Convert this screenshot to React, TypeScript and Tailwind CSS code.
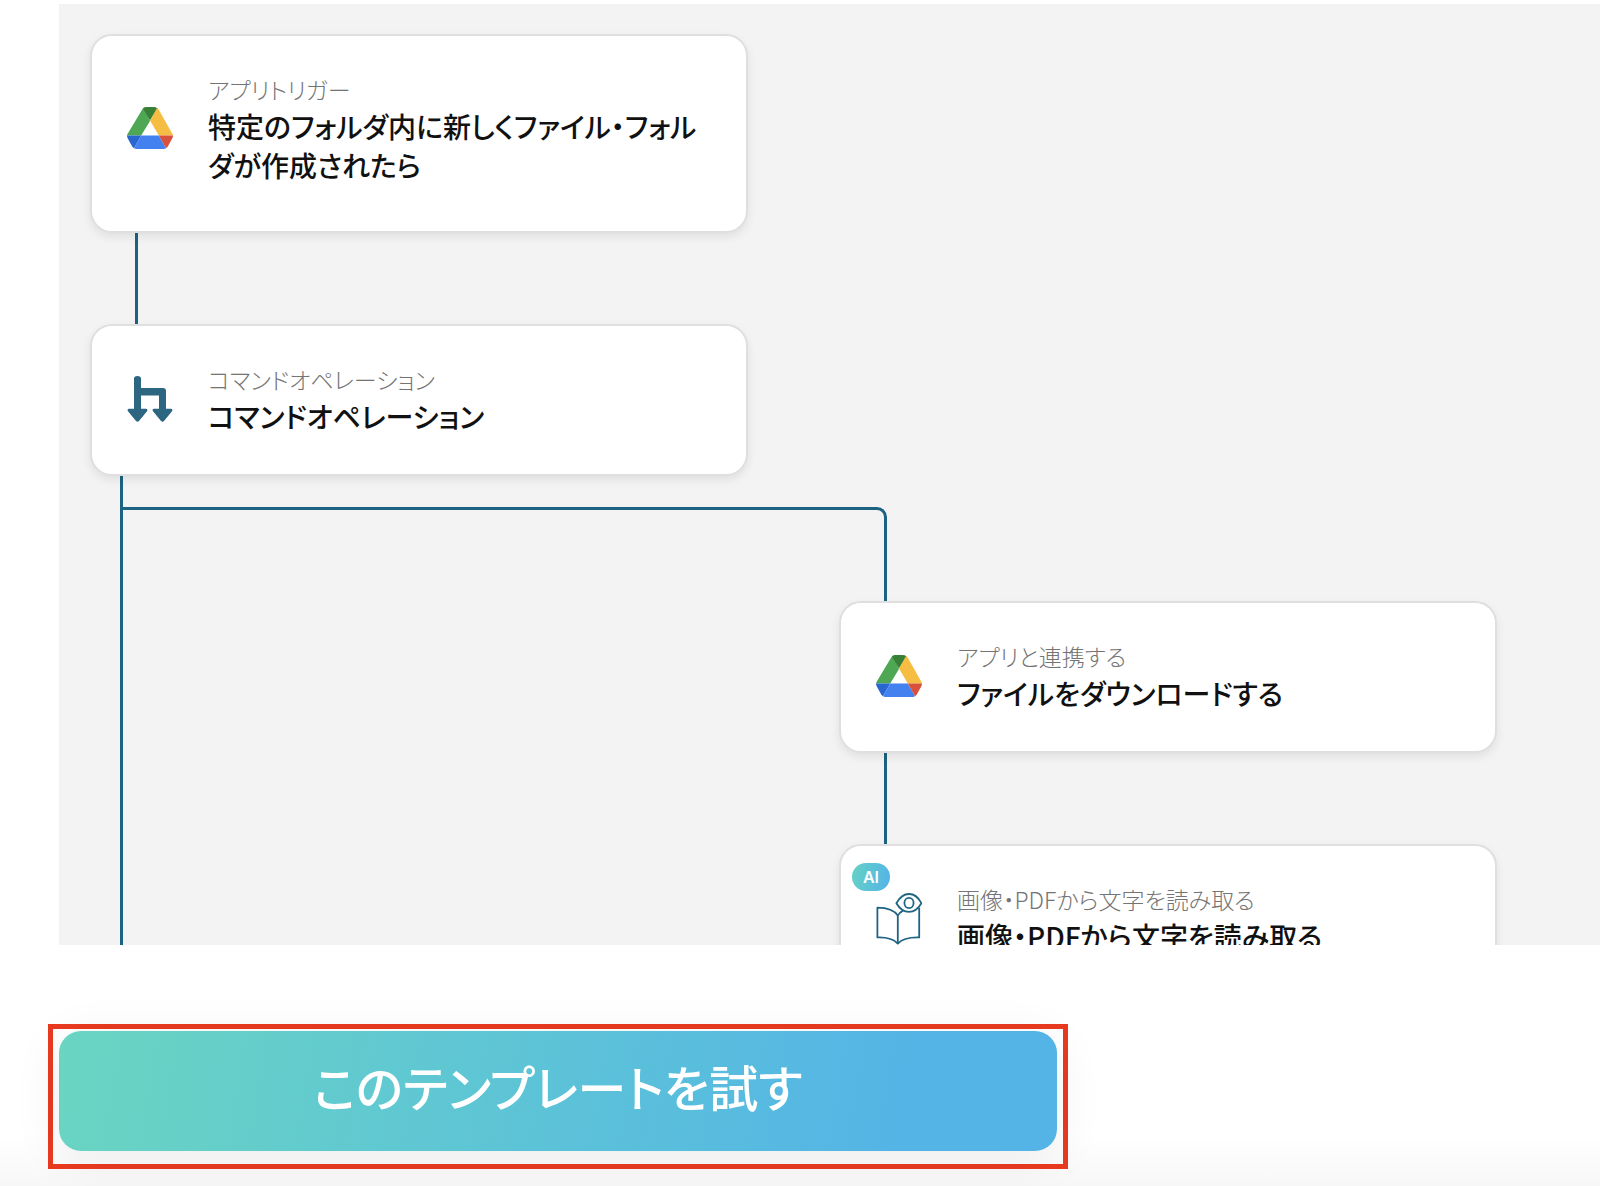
import type { ReactNode } from "react";

function DriveIcon() {
  return (
    <svg viewBox="0 0 46 42" className="h-[42px] w-[46px]" aria-hidden="true">
      <path d="M17 0.6 Q15.8 1.4 15.2 2.6 L0.8 26.6 Q0 27.8 0 28.4 H14.2 L23 14 Z" fill="#4ea853" />
      <path d="M16 1.4 Q17.4 0 19.2 0 H26.8 Q29 0 30.4 1.4 L23 13.4 Z" fill="#3a7f37" />
      <path d="M30.2 0.8 Q31 1.4 31.8 2.8 L45.2 26.4 Q46 27.6 46 28.4 H31.8 L23 13.4 Z" fill="#f5bd42" />
      <path d="M0 28.4 H14.2 L7 41.2 Q6 40.6 5.2 39.4 L0.8 31.6 Q0 30 0 28.4 Z" fill="#2a66d0" />
      <path d="M14.2 28.4 H31.8 L39 41.2 Q38 42 36.8 42 H9.4 Q8 42 7 41.2 Z" fill="#4380f0" />
      <path d="M31.8 28.4 H46 Q46 30 45.2 31.6 L40.8 39.4 Q40 40.6 39 41.2 Z" fill="#d8513d" />
    </svg>
  );
}

function BranchIcon() {
  return (
    <svg viewBox="0 0 46 46" className="h-[46px] w-[46px]" aria-hidden="true" fill="#2c6680">
      <path d="M7 2.5 Q7 0 10.4 0 Q14 0 14 2.5 V12 H36 Q39 12 39 15 V32.8 H44.2 Q46.2 33.4 45 35.2 L37 45 Q35.5 46.6 34 45 L26 35.2 Q24.8 33.4 26.8 32.8 H32 V19.6 H14 V32.8 H19.2 Q21.2 33.4 20 35.2 L12 45 Q10.5 46.6 9 45 L1 35.2 Q-0.2 33.4 1.8 32.8 H7 Z" />
    </svg>
  );
}

function ReadingIcon() {
  return (
    <svg
      viewBox="0 0 46 52"
      className="h-[52px] w-[46px]"
      aria-hidden="true"
      fill="none"
      stroke="#1f6482"
      strokeWidth="1.8"
      strokeLinejoin="round"
    >
      <path d="M21.8 22.6 Q17 14.8 1.4 14.6 V44.4 Q16 44 21.8 50.6 Q27.6 44 43.2 44.4 V14.8" />
      <path d="M21.8 50.6 V22.6 Q23.4 19.6 27 17.6" />
      <path d="M20.4 10.2 Q25.4 1 33 1 Q40.6 1 45.4 10.2 Q40.6 18.8 33 18.8 Q25.4 18.8 20.4 10.2 Z" />
      <ellipse cx="33" cy="10" rx="4.6" ry="5.1" />
    </svg>
  );
}

type StepProps = {
  icon: ReactNode;
  label: string;
  title: string;
  tall?: boolean;
  ai?: boolean;
};

function StepCard({ icon, label, title, tall, ai }: StepProps) {
  return (
    <article
      className={`relative flex w-[658px] items-center gap-[35px] rounded-[22px] border-2 border-[#dfdfdf] bg-white px-[35px] pt-[35px] shadow-[0_4px_10px_rgba(0,0,0,0.08)] ${
        tall ? "pb-[46px]" : "pb-[38px]"
      }`}
    >
      {ai && (
        <span className="absolute top-[17px] left-[11px] flex h-7 w-[38px] items-center justify-center rounded-full bg-linear-100 from-[#66d1c4] to-[#54b3e8] font-[Inter] text-base font-semibold text-white">
          AI
        </span>
      )}
      <div className="flex w-[46px] shrink-0 justify-center">{icon}</div>
      <div className="min-w-0 flex-1">
        <p className="text-[23px] leading-9 font-light text-[#747474]">{label}</p>
        <h2 className="text-[28px] leading-[39px] font-medium text-[#111]">{title}</h2>
      </div>
    </article>
  );
}

export default function App() {
  return (
    <main className="min-h-screen overflow-hidden bg-[linear-gradient(to_top,#f7f7f7,#fff_50px)] pt-1 pl-12 font-['Noto_Sans_CJK_JP',sans-serif] [font-feature-settings:'palt']">
      <section className="ml-[11px] h-[941px] overflow-hidden bg-[#f3f3f3] pt-[30px] pl-[31px]">
        <StepCard
          icon={<DriveIcon />}
          label="アプリトリガー"
          title="特定のフォルダ内に新しくファイル・フォルダが作成されたら"
          tall
        />
        <div className="ml-[45px] h-[91px] w-[3px] bg-[#1b6380]" />
        <StepCard icon={<BranchIcon />} label="コマンドオペレーション" title="コマンドオペレーション" />
        <div className="ml-[30px] border-l-3 border-[#1b6380] pt-[31px]">
          <div className="h-[94px] w-[764px] rounded-tr-[10px] border-t-3 border-r-3 border-[#1b6380]" />
          <div className="ml-[716px]">
            <StepCard icon={<DriveIcon />} label="アプリと連携する" title="ファイルをダウンロードする" />
            <div className="ml-[45px] h-[91px] w-[3px] bg-[#1b6380]" />
            <StepCard
              icon={<ReadingIcon />}
              label="画像・PDFから文字を読み取る"
              title="画像・PDFから文字を読み取る"
              ai
            />
          </div>
        </div>
      </section>

      <div className="mt-[79px] w-[1020px] border-5 border-[#e93a20] px-[6px] pt-[2px] pb-[13px]">
        <button
          type="button"
          className="h-[120px] w-full rounded-[22px] bg-linear-100 from-[#6ad5c1] to-[#54b4e6] to-85% pb-[10px] text-[49px] font-medium text-white shadow-[0_8px_50px_rgba(0,0,0,0.07)]"
        >
          このテンプレートを試す
        </button>
      </div>
    </main>
  );
}
